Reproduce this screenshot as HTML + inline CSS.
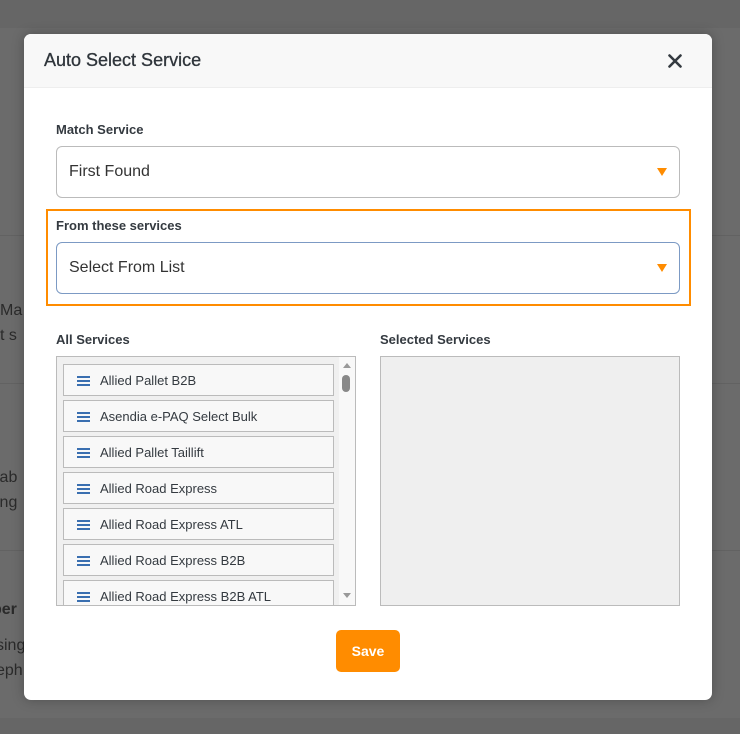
<!DOCTYPE html>
<html><head><style>
*{box-sizing:border-box;margin:0;padding:0}
body{width:740px;height:734px;overflow:hidden;background:#6b6b6b;font-family:"Liberation Sans",sans-serif;position:relative}
.band{position:absolute;left:0;width:740px}
.bt{position:absolute;left:0;color:#2a2a2a;font-size:16px;white-space:nowrap}
.modal{position:absolute;left:24px;top:34px;width:688px;height:666px;background:#fff;border-radius:7px;overflow:hidden;box-shadow:0 0 12px rgba(0,0,0,.25)}
.hdr{height:54px;background:#f8f8f8;border-bottom:1px solid #eee;position:relative}
.hdr h1{position:absolute;left:20px;top:16px;font-size:18px;font-weight:normal;color:#2f353b;-webkit-text-stroke:0.3px #2f353b}
.x{position:absolute;left:644px;top:20px}
.lbl{position:absolute;font-size:13px;font-weight:bold;color:#343a40}
.sel{position:absolute;left:32px;width:624px;height:52px;border:1px solid #bbb;border-radius:6px;font-size:16px;color:#333;padding:16px 12px}
.tri{position:absolute;right:12px;top:21px;width:0;height:0;border-left:5px solid transparent;border-right:5px solid transparent;border-top:8px solid #ff8c00}
.list{position:absolute;left:32px;top:322px;width:300px;height:250px;border:1px solid #bbb;background:#f0f0f0;overflow:hidden}
.item{position:absolute;left:6px;width:271px;height:32px;border:1px solid #bbb;background:#f8f8f8;font-size:13px;color:#343a40;padding:8px 0 0 36px}
.ham{position:absolute;left:13px;top:11px;width:13px;height:10px;border-top:2px solid #3a6fb0;border-bottom:2px solid #3a6fb0}
.ham:after{content:"";position:absolute;left:0;top:2px;width:13px;height:2px;background:#3a6fb0}
.sb{position:absolute;right:0;top:0;width:16px;height:248px;background:#f8f8f8}
</style></head><body>
<div class="band" style="top:0;height:28px;background:#666"></div>
<div class="band" style="top:235px;height:1px;background:#626262"></div>
<div class="band" style="top:383px;height:1px;background:#626262"></div>
<div class="band" style="top:550px;height:1px;background:#626262"></div>
<div class="band" style="top:718px;height:16px;background:#666"></div>
<div class="bt" style="top:302px;left:0">Ma</div>
<div class="bt" style="top:327px;left:-8px">st s</div>
<div class="bt" style="top:469px;left:-4px">lab</div>
<div class="bt" style="top:494px;left:-4px">ing</div>
<div class="bt" style="top:601px;left:-8px;font-weight:bold">ber</div>
<div class="bt" style="top:637px;left:-4px">sing</div>
<div class="bt" style="top:662px;left:-4px">eph</div>
<div class="modal">
 <div class="hdr"><h1>Auto Select Service</h1>
 <svg class="x" width="14" height="14" viewBox="0 0 14 14"><path d="M1.5 1.5L12.5 12.5M12.5 1.5L1.5 12.5" stroke="#343a40" stroke-width="2.6" stroke-linecap="round"/></svg></div>
 <div class="lbl" style="left:32px;top:88px">Match Service</div>
 <div class="sel" style="top:112px">First Found<div class="tri"></div></div>
 <div style="position:absolute;left:22px;top:175px;width:645px;height:97px;border:2px solid #ff8c00"></div>
 <div class="lbl" style="left:32px;top:184px">From these services</div>
 <div class="sel" style="top:208px;border-color:#7c9ac4">Select From List<div class="tri"></div></div>
 <div class="lbl" style="left:32px;top:298px">All Services</div>
 <div class="lbl" style="left:356px;top:298px">Selected Services</div>
 <div class="list">
  <div class="item" style="top:7px"><div class="ham"></div>Allied Pallet B2B</div>
  <div class="item" style="top:43px"><div class="ham"></div>Asendia e-PAQ Select Bulk</div>
  <div class="item" style="top:79px"><div class="ham"></div>Allied Pallet Taillift</div>
  <div class="item" style="top:115px"><div class="ham"></div>Allied Road Express</div>
  <div class="item" style="top:151px"><div class="ham"></div>Allied Road Express ATL</div>
  <div class="item" style="top:187px"><div class="ham"></div>Allied Road Express B2B</div>
  <div class="item" style="top:223px"><div class="ham"></div>Allied Road Express B2B ATL</div>
  <div class="sb">
   <div style="position:absolute;left:4px;top:6px;border-left:4px solid transparent;border-right:4px solid transparent;border-bottom:5px solid #999"></div>
   <div style="position:absolute;left:3px;top:18px;width:8px;height:17px;border-radius:4px;background:#888"></div>
   <div style="position:absolute;left:4px;top:236px;border-left:4px solid transparent;border-right:4px solid transparent;border-top:5px solid #999"></div>
  </div>
 </div>
 <div style="position:absolute;left:356px;top:322px;width:300px;height:250px;border:1px solid #bbb;background:#efefef"></div>
 <div style="position:absolute;left:312px;top:596px;width:64px;height:42px;background:#ff8c00;border-radius:5px;color:#fff;font-weight:bold;font-size:14px;text-align:center;line-height:42px">Save</div>
</div>
</body></html>
